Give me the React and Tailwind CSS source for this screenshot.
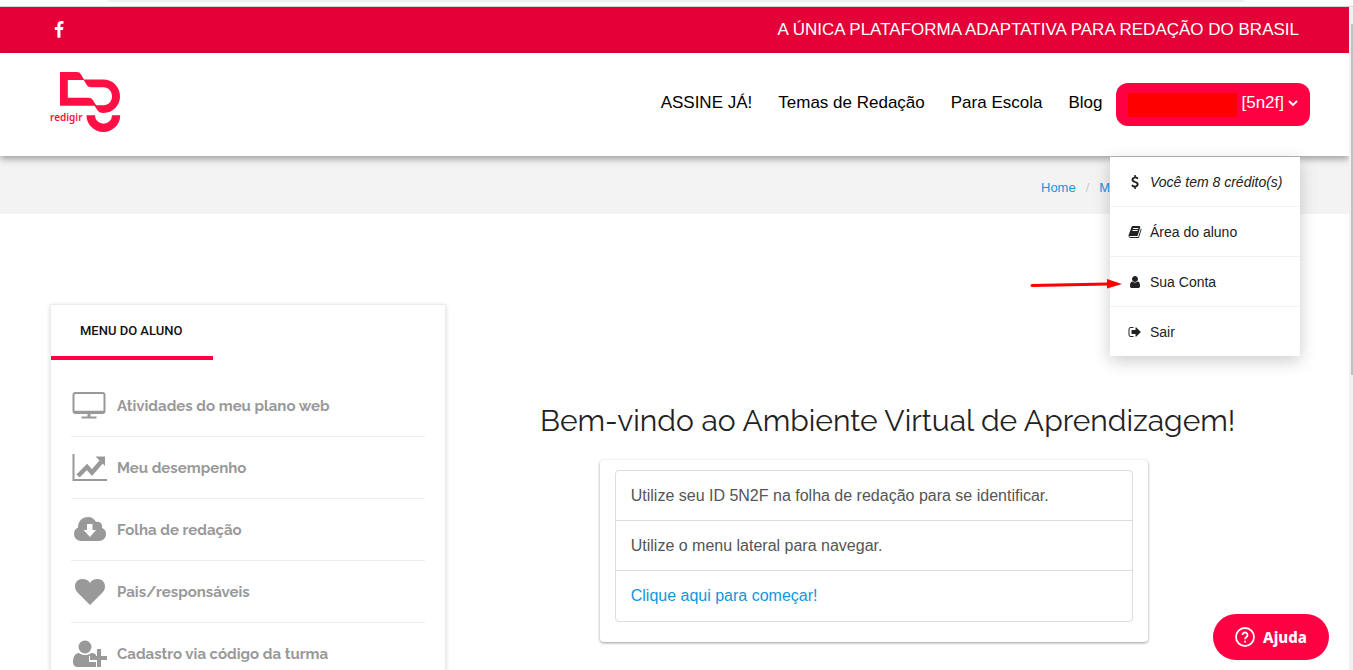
import React, { useState } from 'react';

const dropdownItems = [
    {
        label: 'Você tem 8 crédito(s)',
        italic: true,
        path: 'M1362 1185q0 153-99.500 263.500t-258.500 136.500v175q0 14-9 23t-23 9h-135q-13 0-22.500-9.500t-9.500-22.500v-175q-66-9-127.500-31t-101.500-44.500-74-48-46.500-37.500-17.500-18q-17-21-2-41l103-135q7-10 23-12 15-2 24 9l2 2q113 99 243 125 37 8 74 8 81 0 142.500-43t61.500-122q0-28-15-53t-33.500-42-58.500-37.500-66-32-80-32.500q-39-16-61.500-25t-61.500-26.500-62.500-31-56.500-35.500-53.500-42.500-43.500-49-35.500-58-21-66.500-8.500-78q0-138 98-242t255-134v-180q0-13 9.500-22.500t22.500-9.500h135q14 0 23 9t9 23v176q57 6 110.500 23t87 33.500 63.500 37.500 39 29 15 14q17 18 5 38l-81 146q-8 15-23 16-14 3-27-7-3-3-14.500-12t-39-26.500-58.500-32-74.500-26-85.500-11.500q-95 0-155 43t-60 111q0 26 8.500 48t29.500 41.500 39.500 33 56 31 60.500 27 70 27.500q53 20 81 31.500t76 35 75.500 42.500 62 50 53 63.500 31.500 76.500 13 94z',
    },
    {
        label: 'Área do aluno',
        path: 'M1703 478q40 57 18 129l-275 906q-19 64-76.500 107.500t-122.500 43.500h-923q-77 0-148.500-53.500t-99.500-131.500q-24-67-2-127 0-4 3-27t4-37q1-8-3-21.500t-3-19.500q2-11 8-21t16.500-23.500 16.500-23.500q23-38 45-91.500t30-91.500q3-10 .5-30t-.5-28q3-11 17-28t17-23q21-36 42-92t25-90q1-9-2.500-32t.5-28q4-13 22-30.500t22-22.500q19-26 42.500-84.500t27.500-96.500q1-8-3-25.500t-2-26.500q2-8 9-18t18-23 17-21q8-12 16.500-30.500t15-35 16-36 19.500-32 26.500-23.500 36-11.500 47.500 5.500l-1 3q38-9 51-9h761q74 0 114 56t18 130l-274 906q-36 119-71.500 153.500t-128.500 34.500h-869q-27 0-38 15-11 16-1 43 24 70 144 70h923q29 0 56-15.500t35-41.500l300-987q7-22 5-57 38 15 59 43zm-1064 2q-4 13 2 22.500t20 9.500h608q13 0 25.500-9.500t16.500-22.500l21-64q4-13-2-22.500t-20-9.500h-608q-13 0-25.500 9.500t-16.500 22.500zm-83 256q-4 13 2 22.500t20 9.500h608q13 0 25.500-9.500t16.500-22.500l21-64q4-13-2-22.500t-20-9.500h-608q-13 0-25.500 9.500t-16.500 22.500z',
    },
    {
        label: 'Sua Conta',
        path: 'M1536 1399q0 109-62.500 187t-150.500 78h-854q-88 0-150.500-78t-62.500-187q0-85 8.500-160.500t31.500-152 58.500-131 94-89 134.500-34.500q131 128 313 128t313-128q76 0 134.500 34.500t94 89 58.500 131 31.500 152 8.500 160.500zm-256-887q0 159-112.500 271.500t-271.500 112.500-271.500-112.500-112.500-271.500 112.500-271.500 271.500-112.500 271.500 112.500 112.500 271.500z',
    },
    {
        label: 'Sair',
        path: 'M704 1440q0 4 1 20t.5 26.500-3 23.500-10 19.500-20.500 6.500h-320q-119 0-203.500-84.500t-84.500-203.500v-704q0-119 84.500-203.500t203.500-84.500h320q13 0 22.500 9.500t9.500 22.500q0 4 1 20t.5 26.500-3 23.500-10 19.500-20.500 6.500h-320q-66 0-113 47t-47 113v704q0 66 47 113t113 47h312l11.500 1 11.500 3 8 5.500 7 9 2 13.500zm928-544q0 26-19 45l-544 544q-19 19-45 19t-45-19-19-45v-288h-448q-26 0-45-19t-19-45v-384q0-26 19-45t45-19h448v-288q0-26 19-45t45-19 45 19l544 544q19 19 19 45z',
    },
];

const DesktopIcon = () => (
    <svg viewBox="0 0 36 32" className="mb-1 h-8 w-9" fill="none" stroke="currentColor" strokeWidth="2">
        <rect x="2.500" y="4" width="31" height="20" rx="2" />
        <path d="M3 22.500h30" strokeWidth="1.500" />
        <path d="M18 24v4" strokeWidth="3" />
        <path d="M10.500 28.500h15" />
    </svg>
);

const ChartIcon = () => (
    <svg viewBox="0 0 36 32" className="mb-1 h-8 w-9" fill="none" stroke="currentColor">
        <path d="M2.500 3v26H36" strokeWidth="2" />
        <path d="M7 25l9-9 5 5.500L31 10" strokeWidth="4.500" />
        <path d="M24.500 5.500H34V15z" fill="currentColor" stroke="none" />
    </svg>
);

const CloudIcon = () => (
    <svg viewBox="0 0 36 32" className="mb-1 h-8 w-9" fill="currentColor">
        <path fillRule="evenodd" d="M10 28a7 7 0 0 1-7-7c0-3.500 1.700-5.500 4-6.500C7 8.500 11 4 17 4c4 0 6.500 2 8 5 3-1 7 1 6 6 3 1 4 3.500 4 6 0 4-3 7-7 7zM16 11v6h-3.500l6.500 7 6-7h-3.500v-6z" />
    </svg>
);

const HeartIcon = () => (
    <svg viewBox="0 0 36 32" className="mb-1 h-8 w-9" fill="currentColor">
        <path d="M19 30L7 18c-2-2-3-4-3-6.500C4 7 7 4 11.500 4c3.500 0 6 1.500 7.500 4 1.500-2.500 4-4 7.500-4C31 4 34 7 34 11.500c0 2.500-1 4.500-3 6.500z" />
    </svg>
);

const UserPlusIcon = () => (
    <svg viewBox="0 0 36 32" className="mb-1 h-8 w-9" fill="currentColor">
        <circle cx="14" cy="10" r="6.500" />
        <path d="M8 16c2 1.500 4 2 6 2s4.500-.5 6.500-2c2 0 3.500.6 4.500 2v1h-7v6h7v5H7c-3 0-5-2-5-5 0-5 2-9 6-9z" />
        <path d="M26 12h4v7h6v4h-6v7h-4v-7h-7v-4h7z" />
    </svg>
);

const studentMenu = [
    { label: 'Atividades do meu plano web', Icon: DesktopIcon },
    { label: 'Meu desempenho', Icon: ChartIcon },
    { label: 'Folha de redação', Icon: CloudIcon },
    { label: 'Pais/responsáveis', Icon: HeartIcon },
    { label: 'Cadastro via código da turma', Icon: UserPlusIcon },
];

const Logo = () => (
    <a href="#" aria-label="redigir" className="pb-1.5">
        <svg viewBox="0 0 72 62" className="h-[62px] w-[72px]" fill="#ff0f43">
            <path fillRule="evenodd" d="M10 1h16.500c2.500 0 3.500.8 4.500 2.500L34 8.500h19c10 0 17 7.500 17 16.800S63 42 53.500 42c-3.500 0-5-1-6.500-3.500l-2.500-3.800H10zM17.800 9v17.800h20.500c2.500 0 3.500.8 4.700 2.500l3.200 5h7.300c5 0 8.500-4 8.500-9s-3.500-9-8.500-9H41.500c-3 0-4-1-5.200-3l-2.600-4.300z" />
            <path d="M36.500 44.200H45a8.500 8.500 0 0 0 17 0h8.200a16.800 16.800 0 0 1-33.700 0z" />
            <text x="0" y="50" fontFamily="'Noto Sans', sans-serif" fontSize="10" fontWeight="600">redigir</text>
        </svg>
    </a>
);

const UserMenu = () => {
    const [open, setOpen] = useState(true);

    return (
        <div className="relative">
            <button
                type="button"
                onClick={() => setOpen(!open)}
                className="flex h-[43px] items-center rounded-xl bg-[#ff0043] px-3 text-[17px] text-white"
            >
                <span className="mr-1 h-6 w-[109px] bg-[#ff0000]" />
                <span className="pb-1">[5n2f]</span>
                <svg viewBox="0 0 10 8" className="mb-1 ml-1 h-2 w-[10px]" fill="none" stroke="currentColor" strokeWidth="1.800">
                    <path d="M1 2l4 4 4-4" />
                </svg>
            </button>
            {open && (
                <ul className="absolute top-[74px] right-[10px] z-10 w-[190px] bg-white text-sm text-[#222] shadow-[0_5px_16px_rgba(0,0,0,0.2)]">
                    {dropdownItems.map((item) => (
                        <li key={item.label} className="border-b border-[#f2f2f2] last:border-b-0">
                            <a href="#" className="flex h-[49px] items-center gap-2 pl-[18px]">
                                <svg viewBox="0 0 1792 1792" className="h-[14px] w-[14px]" fill="currentColor">
                                    <path d={item.path} />
                                </svg>
                                <span className={item.italic ? 'italic' : ''}>{item.label}</span>
                            </a>
                        </li>
                    ))}
                </ul>
            )}
            {/* Pointer to "Sua Conta" */}
            <svg viewBox="0 0 92 12" className="absolute top-[195px] right-[188px] z-20 h-3 w-[92px]" fill="#ff0000">
                <path d="M2 7.500L78 6" stroke="#ff0000" strokeWidth="3" strokeLinecap="round" />
                <path d="M77 1l15 5-15 4.500z" />
            </svg>
        </div>
    );
};

const App = () => {
    return (
        <div className="flex h-screen flex-col overflow-hidden bg-white font-['Liberation_Sans',Arial,sans-serif]">
            <div className="h-[7px] shrink-0 border-b border-[#d4d6d8] px-[8%]">
                <div className="h-[2px] rounded-b-full bg-[#f1f1f1]" />
            </div>
            <div className="flex min-h-0 flex-1">
                <div className="min-w-0 flex-1 overflow-hidden">
                    <div className="flex h-[46px] items-center justify-between bg-[#e60038] px-[50px] text-white">
                        <a href="#" aria-label="Facebook">
                            <svg viewBox="0 0 1792 1792" className="h-[18px] w-[18px]" fill="currentColor">
                                <path d="M1343 12v264h-157q-86 0-116 36t-30 108v189h293l-39 296h-254v759h-306v-759h-255v-296h255v-218q0-186 104-288.500t277-102.500q147 0 228 12z" />
                            </svg>
                        </a>
                        <p className="text-[17px]">A ÚNICA PLATAFORMA ADAPTATIVA PARA REDAÇÃO DO BRASIL</p>
                    </div>

                    <header className="relative z-10 flex h-[103px] items-center justify-between bg-white pr-[39px] pl-[50px] shadow-[0_3px_7px_rgba(0,0,0,0.35)]">
                        <Logo />
                        <nav className="flex items-center gap-[26px] text-[17px] text-black">
                            <a href="#" className="pb-1">ASSINE JÁ!</a>
                            <a href="#" className="pb-1">Temas de Redação</a>
                            <a href="#" className="pb-1">Para Escola</a>
                            <div className="flex items-center gap-[14px]">
                                <a href="#" className="pb-1">Blog</a>
                                <UserMenu />
                            </div>
                        </nav>
                    </header>

                    <div className="flex h-[58px] items-center justify-end bg-[#f3f3f3] px-[50px] pt-1.5">
                        <nav className="flex w-[258px] gap-[10px] text-[13px] text-[#1296dd]">
                            <a href="#">Home</a>
                            <span className="text-[#ccc]">/</span>
                            <a href="#">M</a>
                        </nav>
                    </div>

                    <main className="grid grid-cols-3 gap-[30px] px-[50px] pt-[90px]">
                        <aside className="border border-[#ececec] shadow-[0_1px_4px_rgba(0,0,0,0.15)]">
                            <h2 className="inline-block w-[162px] border-b-4 border-[#ff0043] pt-[17px] pb-[17px] pl-[29px] font-['Roboto',sans-serif] text-[13px] leading-[17px] font-medium text-[#111]">
                                MENU DO ALUNO
                            </h2>
                            <ul className="px-5 pt-[15px]">
                                {studentMenu.map(({ label, Icon }) => (
                                    <li key={label} className="border-b border-[#ededed]">
                                        <a href="#" className="flex h-[61px] items-center gap-[10px] pt-0.5 font-['Raleway','Lato',sans-serif] text-[15px] font-bold text-[#999]">
                                            <Icon />
                                            {label}
                                        </a>
                                    </li>
                                ))}
                            </ul>
                        </aside>

                        <section className="col-span-2 pt-[95px]">
                            <h1 className="text-center font-['Raleway','Lato',sans-serif] text-[30px] leading-[44px] font-normal text-[#222]">
                                Bem-vindo ao Ambiente Virtual de Aprendizagem!
                            </h1>
                            <div className="mt-[17px] ml-[15%] w-2/3 rounded-sm px-[15px] pt-[10px] pb-5 shadow-[0_1px_3px_rgba(0,0,0,0.4)]">
                                <ul className="divide-y divide-[#ddd] rounded border border-[#ddd] text-base text-[#555]">
                                    <li className="flex min-h-[50px] items-center px-[15px]">Utilize seu ID 5N2F na folha de redação para se identificar.</li>
                                    <li className="flex min-h-[50px] items-center px-[15px]">Utilize o menu lateral para navegar.</li>
                                    <li className="flex min-h-[50px] items-center px-[15px]">
                                        <a href="#" className="text-[#1296dd]">Clique aqui para começar!</a>
                                    </li>
                                </ul>
                            </div>
                        </section>
                    </main>
                </div>
                <div className="w-1 shrink-0 bg-[#f1f1f1] pt-[17px]">
                    <div className="ml-[2px] h-[351px] bg-[#c1c1c1]" />
                </div>
            </div>

            <button
                type="button"
                className="fixed right-6 bottom-[10px] flex h-[46px] w-[116px] items-center justify-center gap-2 rounded-full bg-[#ff0043] font-['Noto_Sans',sans-serif] text-[15px] font-extrabold text-white"
            >
                <svg viewBox="0 0 20 20" className="h-5 w-5" fill="none" stroke="currentColor" strokeWidth="1.800">
                    <circle cx="10" cy="10" r="9" />
                    <path d="M7.500 8a2.500 2.500 0 1 1 4 2c-1 .7-1.500 1.200-1.500 2.300M10 13.800v1.800" />
                </svg>
                Ajuda
            </button>
        </div>
    );
};

export default App;
